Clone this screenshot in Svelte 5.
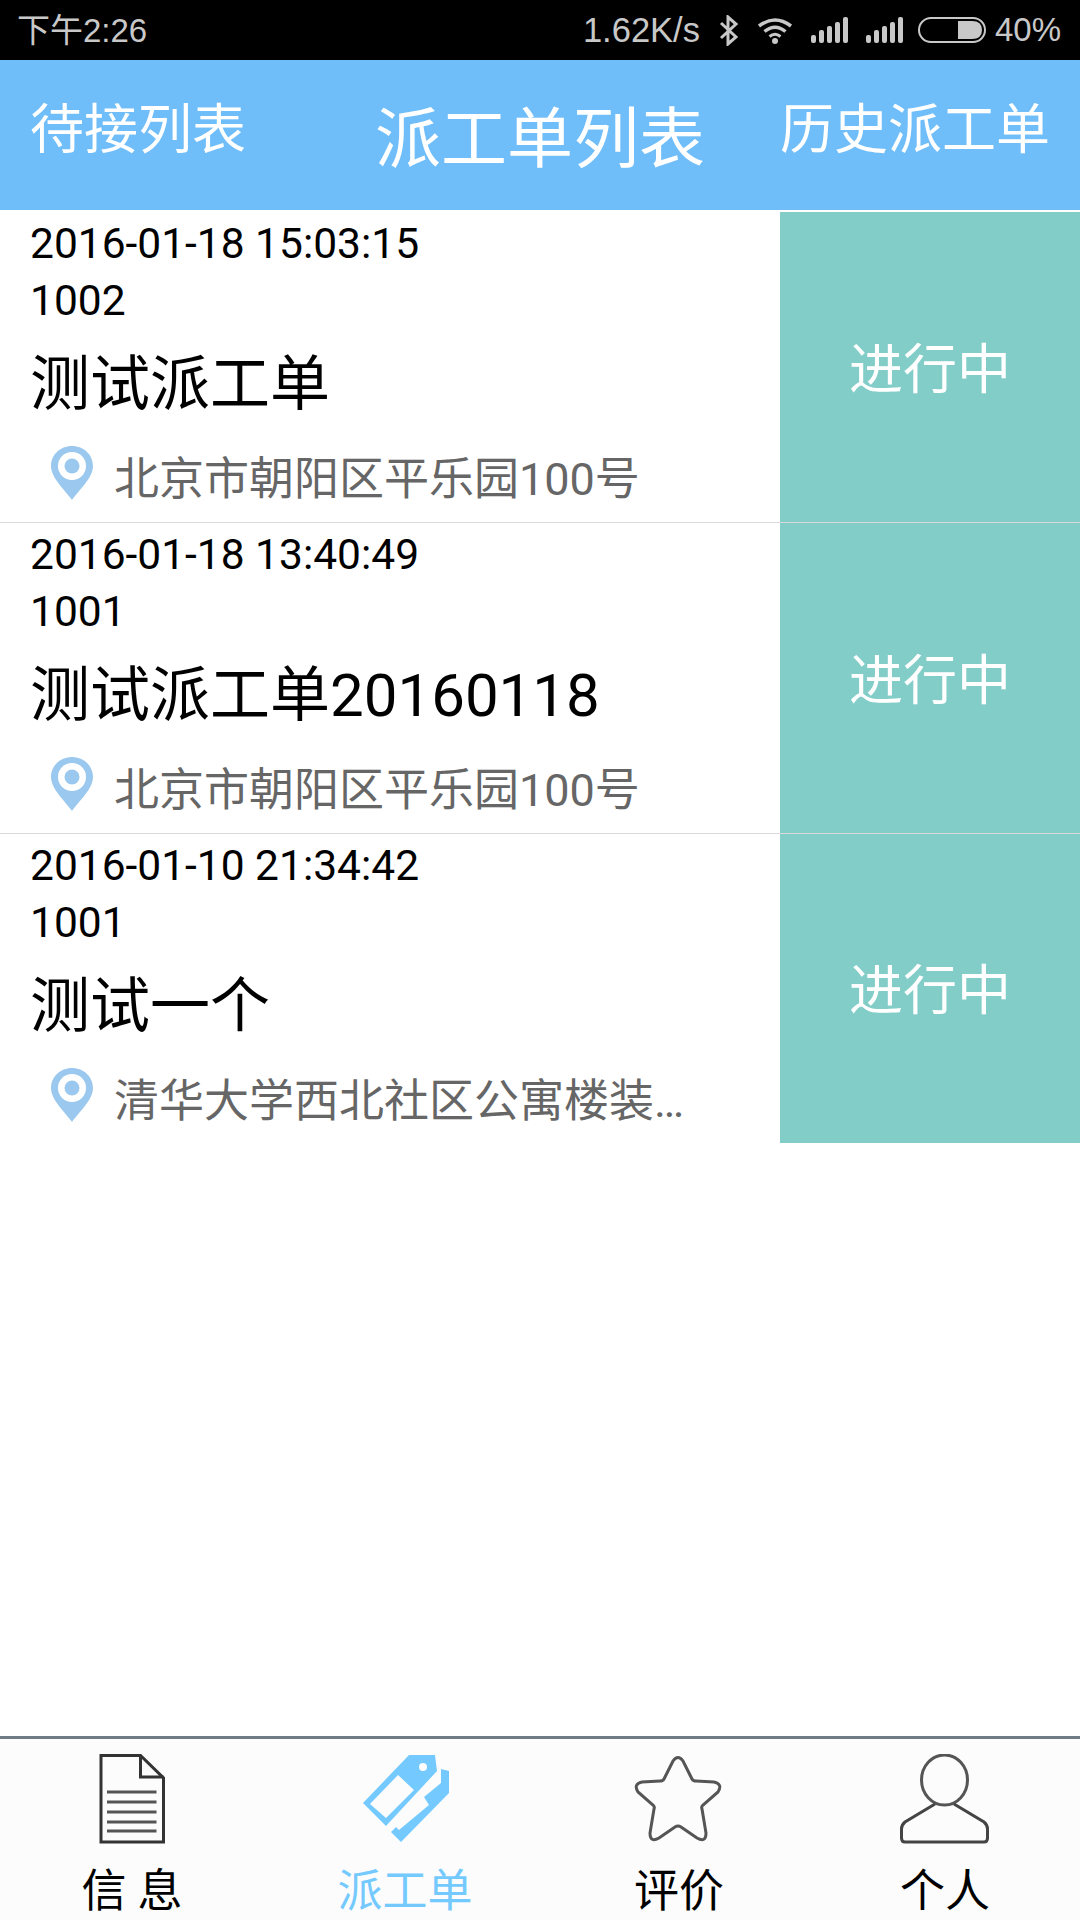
<script>
  const orders = [
    { time: '2016-01-18 15:03:15', no: '1002', title: '测试派工单', addr: '北京市朝阳区平乐园100号' },
    { time: '2016-01-18 13:40:49', no: '1001', title: '测试派工单20160118', addr: '北京市朝阳区平乐园100号' },
    { time: '2016-01-10 21:34:42', no: '1001', title: '测试一个', addr: '清华大学西北社区公寓楼装…' }
  ];
</script>

<div class="page">
  <div class="status">
    <span class="clock">下午2:26</span>
    <span class="speed">1.62K/s</span>
    <svg class="bt" width="20" height="31" viewBox="0 0 20 31">
      <path d="M2 8 L17 22 L9 29 V2 L17 9 L2 23" fill="none" stroke="#c8c8c8" stroke-width="3" />
    </svg>
    <svg class="wifi" width="36" height="27" viewBox="0 0 36 27">
      <path d="M2 9 Q18 -3 34 9" fill="none" stroke="#c8c8c8" stroke-width="3.5" />
      <path d="M7.5 14.5 Q18 6 28.5 14.5" fill="none" stroke="#c8c8c8" stroke-width="3.5" />
      <path d="M12.5 19.5 Q18 15 23.5 19.5" fill="none" stroke="#c8c8c8" stroke-width="3" />
      <circle cx="18" cy="24" r="3" fill="#c8c8c8" />
    </svg>
    {#each [0, 1] as s}
      <svg class="signal" width="37" height="26" viewBox="0 0 37 26">
        <rect x="0" y="18" width="5" height="8" rx="2" fill="#c8c8c8" />
        <rect x="8" y="13" width="5" height="13" rx="2" fill="#c8c8c8" />
        <rect x="16" y="9" width="5" height="17" rx="2" fill="#c8c8c8" />
        <rect x="24" y="5" width="5" height="21" rx="2" fill="#c8c8c8" />
        <rect x="32" y="0" width="5" height="26" rx="2" fill="#c8c8c8" />
      </svg>
    {/each}
    <svg class="batt" width="68" height="26" viewBox="0 0 68 26">
      <rect x="1" y="1" width="66" height="24" rx="12" fill="none" stroke="#c8c8c8" stroke-width="2" />
      <path d="M40 4 H54 Q64 4 64 13 Q64 22 54 22 H40 Z" fill="#c8c8c8" />
    </svg>
    <span class="pct">40%</span>
  </div>

  <header>
    <span class="side left">待接列表</span>
    <span class="title">派工单列表</span>
    <span class="side right">历史派工单</span>
  </header>

  <div class="list">
    {#each orders as o, i}
      <div class="row" class:last={i === orders.length - 1}>
        <div class="info">
          <div class="time">{o.time}</div>
          <div class="no">{o.no}</div>
          <div class="name">{o.title}</div>
          <div class="addr">
            <svg width="42" height="54" viewBox="0 0 42 54">
              <path d="M21 0 C33 0 42 9 42 20 C42 32 28 44 21 54 C14 44 0 32 0 20 C0 9 9 0 21 0 Z" fill="#9bc8ee" />
              <circle cx="21" cy="20" r="14" fill="#fff" />
              <circle cx="21" cy="20" r="7.5" fill="#9bc8ee" />
            </svg>
            <span>{o.addr}</span>
          </div>
        </div>
        <div class="state">进行中</div>
      </div>
    {/each}
  </div>

  <nav>
    <div class="tab doc">
      <svg width="90" height="90" viewBox="-12.5 0 90 90">
        <path d="M1.5 1.5 H41 L64 24 V88 H1.5 Z" fill="none" stroke="#333" stroke-width="3" />
        <path d="M41 1.5 V23 H64" fill="none" stroke="#333" stroke-width="3" />
        {#each [38, 48, 58, 68, 77] as y}
          <line x1="7.5" x2="57" y1={y} y2={y} stroke="#555" stroke-width="3" />
        {/each}
      </svg>
      <span>信 息</span>
    </div>
    <div class="tab active">
      <svg width="90" height="90" viewBox="21 19 90 90">
        <path fill-rule="evenodd" fill="#74cafe" d="M24 68 L70 20 H96 L98 36 L47 91 Z M59 40 L31 69 L47 83 L75 55 Z M84 28 A4 4 0 1 0 84 36 A4 4 0 1 0 84 28 Z" />
        <path fill="#74cafe" d="M52 97 L62 107 L110 58 V36 L102 34 V48 L85 62 L90 70 L60 95 L57 92 Z" />
      </svg>
      <span>派工单</span>
    </div>
    <div class="tab star">
      <svg width="90" height="90" viewBox="0 -1 90 90">
        <path d="M39 6 Q44 -1 49 6 L58 24 Q59 26 62 26 L80 27 Q89 29 84 37 L69 50 Q67 52 68 54 L72 78 Q72 88 63 83 L47 72 Q44 70 41 72 L25 83 Q16 88 16 78 L20 54 Q21 52 19 50 L4 37 Q-1 29 8 27 L26 26 Q29 26 30 24 Z" fill="none" stroke="#555" stroke-width="3" />
      </svg>
      <span>评价</span>
    </div>
    <div class="tab">
      <svg width="90" height="90" viewBox="0 0 90 90">
        <ellipse cx="44.5" cy="26" rx="23" ry="25" fill="none" stroke="#555" stroke-width="3" />
        <path d="M35 50 L5 68 Q1.5 71 1.5 75 V84 Q1.5 88 5 88 H84 Q87.5 88 87.5 84 V75 Q87.5 71 84 68 L54 50" fill="none" stroke="#444" stroke-width="3" />
      </svg>
      <span>个人</span>
    </div>
  </nav>
</div>

<style>
  :global(body) {
    margin: 0;
    background: #fff;
  }

  .page {
    display: flex;
    flex-direction: column;
    height: 1920px;
    font-family: Roboto, "Noto Sans CJK SC", sans-serif;
    overflow: hidden;
  }

  .status {
    display: flex;
    align-items: center;
    flex: none;
    height: 60px;
    padding: 0 19px 0 17px;
    background: #000;
    color: #c8c8c8;
    font-family: "Liberation Sans", "Noto Sans CJK SC", sans-serif;
    font-size: 33px;
  }

  .clock {
    margin-right: auto;
    margin-bottom: 4px;
  }

  .speed {
    margin-right: 19px;
    font-size: 34.5px;
  }

  .bt {
    margin-right: 18px;
  }

  .wifi {
    margin-right: 18px;
  }

  .signal {
    margin-right: 18px;
  }

  .batt {
    margin-left: -3px;
    margin-right: 9px;
  }

  header {
    display: grid;
    grid-template-columns: 1fr auto 1fr;
    align-items: center;
    flex: none;
    height: 150px;
    padding: 0 30px 0 30px;
    margin-bottom: 2px;
    background: #6fbdf9;
    color: #fff;
  }

  .side {
    font-size: 54px;
    padding-bottom: 20px;
  }

  .right {
    justify-self: end;
  }

  .title {
    font-size: 66px;
    padding-bottom: 4px;
  }

  .list {
    flex: 1;
  }

  .row {
    display: flex;
    height: 310px;
    border-bottom: 1px solid #d9d9d9;
  }

  .row.last {
    height: 309px;
    border-bottom: none;
  }

  .info {
    flex: 1;
    min-width: 0;
    padding: 3px 0 0 30px;
    color: #000;
  }

  .time {
    font-size: 42.5px;
    line-height: 57px;
  }

  .no {
    font-size: 42.5px;
    line-height: 57px;
  }

  .name {
    margin-top: 16px;
    font-size: 60px;
    line-height: 80px;
  }

  .addr {
    display: flex;
    align-items: flex-start;
    margin: 21px 0 0 21px;
    color: #666;
    font-size: 45px;
    line-height: 60px;
  }

  .addr svg {
    filter: blur(0.6px);
  }

  .addr span {
    margin: 4px 0 0 21px;
  }

  .state {
    display: flex;
    align-items: center;
    justify-content: center;
    flex: none;
    width: 300px;
    padding-bottom: 4px;
    box-sizing: border-box;
    background: #83cdc8;
    color: #fff;
    font-size: 54px;
  }

  nav {
    display: grid;
    grid-template-columns: repeat(4, 1fr);
    flex: none;
    height: 181px;
    border-top: 3px solid #6f7b85;
    background: #fcfcfc;
  }

  .tab {
    display: flex;
    flex-direction: column;
    align-items: center;
    padding-top: 15px;
    color: #000;
    font-size: 45px;
  }

  .tab.doc {
    padding-right: 6px;
  }

  .tab.star {
    padding-left: 8px;
  }

  .tab svg {
    flex: none;
    filter: blur(0.6px);
  }

  .tab span {
    margin-top: 20px;
    line-height: 56px;
  }

  .tab.active {
    color: #74cafe;
  }
</style>
